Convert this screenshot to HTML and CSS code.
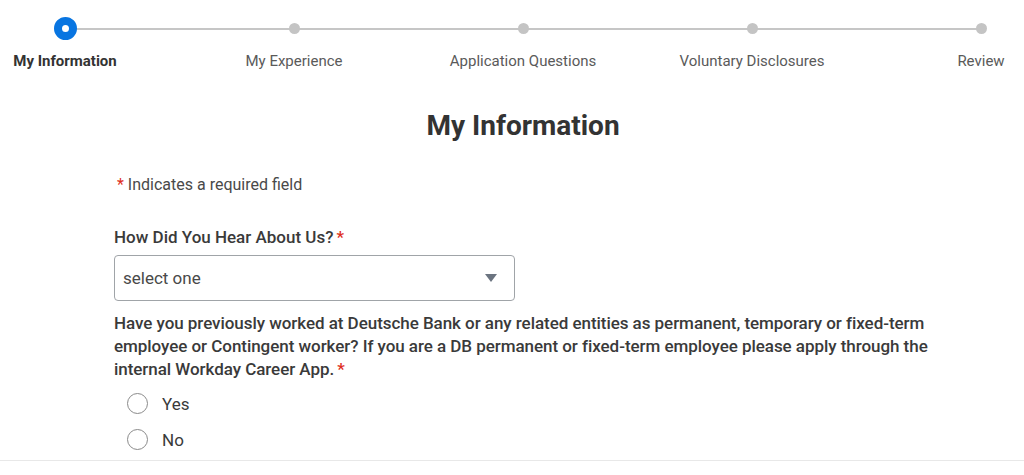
FILE: index.html
```html
<!DOCTYPE html>
<html>
<head>
<meta charset="utf-8">
<link rel="stylesheet" href="styles.css">
</head>
<body>
<div class="page">
  <div class="stepper">
    <div class="track"></div>
    <div class="step active"><span class="dot"></span><span class="step-label">My Information</span></div>
    <div class="step"><span class="dot"></span><span class="step-label">My Experience</span></div>
    <div class="step"><span class="dot"></span><span class="step-label">Application Questions</span></div>
    <div class="step"><span class="dot"></span><span class="step-label">Voluntary Disclosures</span></div>
    <div class="step"><span class="dot"></span><span class="step-label">Review</span></div>
  </div>

  <h1 class="title">My Information</h1>

  <div class="form">
    <p class="required-note"><span class="req">*</span> Indicates a required field</p>

    <div class="field">
      <label class="field-label">How Did You Hear About Us?<span class="req">*</span></label>
      <div class="select">
        <span class="select-value">select one</span>
        <span class="caret"></span>
      </div>
    </div>

    <div class="field question">
      <p class="field-label long">Have you previously worked at Deutsche Bank or any related entities as permanent, temporary or fixed-term employee or Contingent worker? If you are a DB permanent or fixed-term employee please apply through the internal Workday Career App.<span class="req">*</span></p>
      <div class="radios">
        <label class="radio"><span class="radio-circle"></span><span>Yes</span></label>
        <label class="radio"><span class="radio-circle"></span><span>No</span></label>
      </div>
    </div>
  </div>
</div>
</body>
</html>
```

FILE: styles.css
```css
* { box-sizing: border-box; }
html, body { margin: 0; padding: 0; background: #fff; }
body {
  font-family: Roboto, "Liberation Sans", sans-serif;
  color: #333;
  width: 1024px;
  height: 475px;
  overflow: hidden;
}
.page {
  height: 461px;
  border-bottom: 1px solid #e8e8e8;
}

/* Stepper */
.stepper {
  position: relative;
  display: flex;
  justify-content: space-between;
  margin-left: 65px;
  width: 916px;
  padding-top: 17px;
}
.track {
  position: absolute;
  left: 0;
  right: 0;
  top: 28px;
  height: 2px;
  background: #c6c6c6;
}
.step {
  width: 0;
  display: flex;
  flex-direction: column;
  align-items: center;
  position: relative;
}
.dot {
  width: 11px;
  height: 11px;
  margin-top: 6px;
  margin-bottom: 6px;
  border-radius: 50%;
  background: #c4c4c4;
}
.step.active .dot {
  width: 23px;
  height: 23px;
  margin: 0;
  background: #fff;
  border: 8px solid #0875e1;
}
.step-label {
  margin-top: 12px;
  font-size: 15px;
  line-height: 18px;
  white-space: nowrap;
  color: #5a5a5a;
}
.step.active .step-label {
  font-weight: 700;
  color: #333;
}

/* Title */
.title {
  margin: 40px 0 0;
  padding-left: 22px;
  text-align: center;
  font-size: 28px;
  line-height: 32px;
  font-weight: 700;
  color: #333;
}

/* Form */
.form {
  margin-left: 114px;
  width: 824px;
}
.required-note {
  margin: 33px 0 0;
  font-size: 16px;
  line-height: 20px;
  color: #494949;
}
.req {
  color: #de2e21;
  margin-left: 3px;
}
.field { margin-top: 32px; }
.field-label {
  display: block;
  font-size: 17px;
  line-height: 20px;
  font-weight: 500;
  color: #3a3a3a;
  margin: 0;
}
.select {
  margin-top: 8px;
  width: 401px;
  height: 46px;
  border: 1px solid #a0a4a8;
  border-radius: 4px;
  display: flex;
  align-items: center;
  justify-content: space-between;
  padding: 0 17px 0 8px;
}
.select-value {
  font-size: 17px;
  color: #494949;
}
.caret {
  width: 0;
  height: 0;
  border-left: 6px solid transparent;
  border-right: 6px solid transparent;
  border-top: 8px solid #6b7480;
}
.question { margin-top: 11px; }
.field-label.long {
  line-height: 23px;
  letter-spacing: -0.05px;
}
.radios {
  margin-top: 12px;
  display: flex;
  flex-direction: column;
  gap: 15px;
}
.radio {
  display: flex;
  align-items: center;
  gap: 14px;
  padding-left: 13px;
  font-size: 17px;
  color: #3a3a3a;
  line-height: 20px;
}
.radio-circle {
  width: 21px;
  height: 21px;
  border: 1px solid #8a8a8a;
  border-radius: 50%;
}
```
